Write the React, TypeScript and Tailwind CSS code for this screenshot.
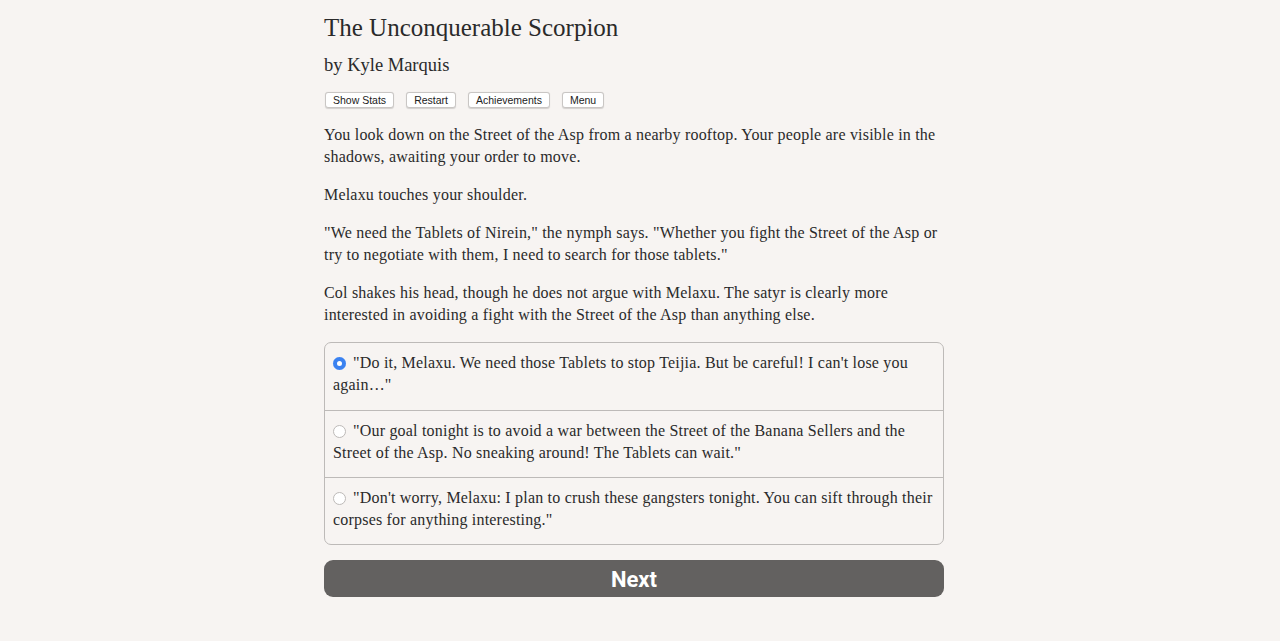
import { useState } from 'react';

const serif = "font-['Liberation_Serif','Times_New_Roman',serif]";

const paragraphs = [
  'You look down on the Street of the Asp from a nearby rooftop. Your people are visible in the shadows, awaiting your order to move.',
  'Melaxu touches your shoulder.',
  '"We need the Tablets of Nirein," the nymph says. "Whether you fight the Street of the Asp or try to negotiate with them, I need to search for those tablets."',
  'Col shakes his head, though he does not argue with Melaxu. The satyr is clearly more interested in avoiding a fight with the Street of the Asp than anything else.',
];

const choices = [
  '"Do it, Melaxu. We need those Tablets to stop Teijia. But be careful! I can\'t lose you again…"',
  '"Our goal tonight is to avoid a war between the Street of the Banana Sellers and the Street of the Asp. No sneaking around! The Tablets can wait."',
  '"Don\'t worry, Melaxu: I plan to crush these gangsters tonight. You can sift through their corpses for anything interesting."',
];

const menu = ['Show Stats', 'Restart', 'Achievements', 'Menu'];

export default function App() {
  const [picked, setPicked] = useState(0);

  return (
    <div className="min-h-screen bg-[#f7f4f2] text-[#2a2a2a]">
      <div className={`ml-[calc(50%-316px)] w-[620px] pt-[12px] ${serif}`}>
        <h1 className="text-[25px] leading-[32px]">The Unconquerable Scorpion</h1>
        <h2 className="mt-[7px] text-[18.5px] leading-[28px]">by Kyle Marquis</h2>

        <div className="mt-[13px] flex gap-[12px] pl-[1px] font-['Liberation_Sans',Arial,sans-serif]">
          {menu.map((label) => (
            <button
              key={label}
              className="h-[16px] rounded-[3px] border border-[#c9c6c4] bg-white px-[7px] text-[10.5px] leading-[14px] text-[#222] shadow-[0_0.5px_1px_rgba(0,0,0,0.15)]"
            >
              {label}
            </button>
          ))}
        </div>

        <div className="mt-[16px] flex flex-col gap-[16px] text-[16px] leading-[22px] tracking-[0.2px]">
          {paragraphs.map((p) => (
            <p key={p}>{p}</p>
          ))}
        </div>

        <div className="mt-[16px] overflow-hidden rounded-[7px] border border-[#bdbab8]">
          {choices.map((c, i) => (
            <label
              key={c}
              onClick={() => setPicked(i)}
              className="block min-h-[67px] cursor-pointer border-t border-[#bdbab8] px-[8px] pt-[9px] pb-[11px] text-[16px] leading-[22px] tracking-[0.2px] first:border-t-0"
            >
              <span
                className={`mr-[7px] inline-block h-[13px] w-[13px] translate-y-[1px] rounded-full align-[-1px] ${
                  picked === i
                    ? 'bg-[#3b82f0] shadow-[inset_0_0_0_4px_#3b82f0,inset_0_0_0_7px_white]'
                    : 'border border-[#bdbab8] bg-white'
                }`}
              />
              {c}
            </label>
          ))}
        </div>

        <button className="mt-[15px] h-[37px] w-full rounded-[9px] bg-[#636160] pt-[2px] font-['Roboto','Liberation_Sans',sans-serif] text-[22px] font-bold text-white">
          Next
        </button>
      </div>
    </div>
  );
}
